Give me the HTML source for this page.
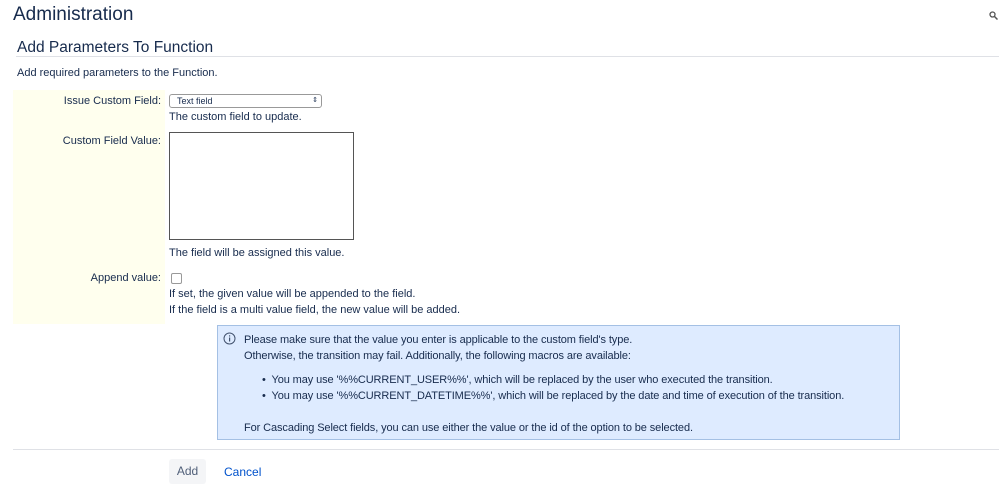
<!DOCTYPE html>
<html><head><style>
body{margin:0;width:999px;height:502px;background:#fff;font-family:"Liberation Sans",Arial,sans-serif;color:#172b4d;position:relative;overflow:hidden;font-size:11px}
.a{position:absolute;white-space:nowrap}
.lbl{right:838px;text-align:right}
.info{letter-spacing:-0.1px}
</style></head><body>
<div class="a" style="left:13px;top:4px;font-size:19px;">Administration</div>
<svg class="a" style="left:989px;top:11px" width="9" height="9" viewBox="0 0 9 9"><circle cx="3.5" cy="3.5" r="2.5" fill="none" stroke="#555" stroke-width="1.3"/><line x1="5.5" y1="5.5" x2="8.5" y2="8.5" stroke="#555" stroke-width="1.5"/></svg>
<div class="a" style="left:17px;top:39px;font-size:15.5px;">Add Parameters To Function</div>
<div class="a" style="left:16px;top:56px;width:983px;height:1px;background:#dfe1e6"></div>
<div class="a" style="left:17px;top:67px;">Add required parameters to the Function.</div>
<div class="a" style="left:13px;top:90px;width:152px;height:234px;background:#ffffee"></div>
<div class="a lbl" style="top:95px;">Issue Custom Field:</div>
<div class="a" style="left:169px;top:94px;width:153px;height:14px;border:1px solid #999;border-radius:3px;background:#fff;font-size:9px;line-height:12px;box-sizing:border-box;padding-left:7px">Text field<span style="position:absolute;right:3px;top:0;font-size:7px">&#8661;</span></div>
<div class="a" style="left:169px;top:111px;">The custom field to update.</div>
<div class="a lbl" style="top:135px;">Custom Field Value:</div>
<div class="a" style="left:169px;top:132px;width:185px;height:108px;border:1px solid #555;box-sizing:border-box;background:#fff"></div>
<div class="a" style="left:169px;top:247px;">The field will be assigned this value.</div>
<div class="a lbl" style="top:272px;">Append value:</div>
<div class="a" style="left:171px;top:273px;width:9px;height:9px;border:1px solid #999;border-radius:2px;background:#fff"></div>
<div class="a" style="left:169px;top:288px;">If set, the given value will be appended to the field.</div>
<div class="a" style="left:169px;top:304px;">If the field is a multi value field, the new value will be added.</div>
<div class="a" style="left:217px;top:325px;width:683px;height:115px;background:#deebff;border:1px solid #a4c0e4;box-sizing:border-box"></div>
<svg class="a" style="left:223px;top:332px" width="13" height="13" viewBox="0 0 13 13"><circle cx="6.5" cy="6.5" r="5.5" fill="none" stroke="#42526e" stroke-width="1"/><rect x="6" y="5.5" width="1.2" height="4" fill="#42526e"/><rect x="6" y="3.3" width="1.2" height="1.2" fill="#42526e"/></svg>
<div class="a info" style="left:244px;top:334px;">Please make sure that the value you enter is applicable to the custom field's type.</div>
<div class="a info" style="left:244px;top:350px;">Otherwise, the transition may fail. Additionally, the following macros are available:</div>
<div class="a info" style="left:262px;top:374px;">•&nbsp; You may use '%%CURRENT_USER%%', which will be replaced by the user who executed the transition.</div>
<div class="a info" style="left:262px;top:390px;">•&nbsp; You may use '%%CURRENT_DATETIME%%', which will be replaced by the date and time of execution of the transition.</div>
<div class="a info" style="left:244px;top:422px;">For Cascading Select fields, you can use either the value or the id of the option to be selected.</div>
<div class="a" style="left:13px;top:449px;width:986px;height:1px;background:#dfe1e6"></div>
<div class="a" style="left:169px;top:459px;width:37px;height:25px;background:#f4f5f7;border-radius:3px;text-align:center;line-height:25px;font-size:12px;color:#505f79">Add</div>
<div class="a" style="left:224px;top:465px;font-size:12px;color:#0052cc">Cancel</div>
</body></html>
